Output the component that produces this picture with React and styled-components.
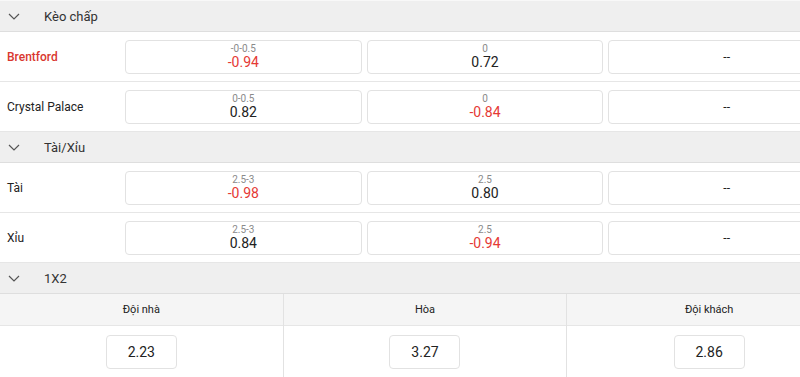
import React from 'react';
import styled, { createGlobalStyle } from 'styled-components';

const GlobalStyle = createGlobalStyle`
  html, body { margin: 0; padding: 0; background: #fff; overflow: hidden; }
  body { font-family: Roboto, "Noto Sans", Arial, sans-serif; color: #222; }
`;

const sections = [
  {
    title: 'Kèo chấp',
    rows: [
      { team: 'Brentford', highlight: true, cells: [{ line: '-0-0.5', odd: '-0.94' }, { line: '0', odd: '0.72' }, null] },
      { team: 'Crystal Palace', cells: [{ line: '0-0.5', odd: '0.82' }, { line: '0', odd: '-0.84' }, null] },
    ],
  },
  {
    title: 'Tài/Xỉu',
    rows: [
      { team: 'Tài', cells: [{ line: '2.5-3', odd: '-0.98' }, { line: '2.5', odd: '0.80' }, null] },
      { team: 'Xỉu', cells: [{ line: '2.5-3', odd: '0.84' }, { line: '2.5', odd: '-0.94' }, null] },
    ],
  },
];

const result = [
  { label: 'Đội nhà', odd: '2.23' },
  { label: 'Hòa', odd: '3.27' },
  { label: 'Đội khách', odd: '2.86' },
];

// the odds table is wider than the viewport and gets cut on the right
const Viewport = styled.div`
  width: 100vw;
  overflow: hidden;
`;

const Wrapper = styled.div`
  width: 851px;
  border-top: 1px solid #f8f8f8;
`;

const SectionHeader = styled.div`
  height: 30px;
  display: flex;
  align-items: center;
  background: #efefef;
  border-bottom: 1px solid #dedede;
  font-size: 13px;
  color: #333;
`;

const Chevron = styled.span`
  width: 44px;
  display: flex;
  padding-left: 8px;
  box-sizing: border-box;
  color: #555;
`;

const Row = styled.div`
  height: 49px;
  display: flex;
  align-items: center;
  padding: 0 6px 0 7px;
  border-bottom: 1px solid #e6e6e6;
  gap: 5px;
`;

const Team = styled.div`
  width: 113px;
  flex-shrink: 0;
  font-size: 12px;
  font-weight: ${p => (p.$highlight ? 500 : 400)};
  color: ${p => (p.$highlight ? '#d9372f' : '#222')};
`;

const OddBox = styled.div`
  flex: 1;
  height: 34px;
  box-sizing: border-box;
  border: 1px solid #e2e2e2;
  border-radius: 4px;
  display: flex;
  flex-direction: column;
  align-items: center;
  justify-content: center;
  padding-top: 1px;
`;

const Line = styled.div`
  font-size: 10px;
  line-height: 11px;
  color: #8a8a8a;
`;

const Odd = styled.div`
  font-size: 14px;
  line-height: 17px;
  color: ${p => (p.$neg ? '#e53935' : '#222')};
`;

const Empty = styled.div`
  font-size: 12px;
  color: #222;
`;

const Grid = styled.div`
  display: grid;
  grid-template-columns: repeat(3, 1fr);
`;

const Column = styled.div`
  display: flex;
  flex-direction: column;
  border-right: 1px solid #e2e2e2;
  &:last-child { border-right: none; }
`;

const ColHead = styled.div`
  height: 31px;
  display: flex;
  align-items: center;
  justify-content: center;
  background: #f5f5f5;
  border-bottom: 1px solid #e6e6e6;
  font-size: 11px;
  color: #222;
`;

const ColBody = styled.div`
  height: 51px;
  display: flex;
  justify-content: center;
  padding-top: 9px;
  box-sizing: border-box;
`;

const ResultBox = styled.div`
  width: 71px;
  height: 34px;
  box-sizing: border-box;
  border: 1px solid #e2e2e2;
  border-radius: 4px;
  display: flex;
  align-items: center;
  justify-content: center;
  font-size: 14px;
  color: #222;
`;

const Header = ({ title }) => (
  <SectionHeader>
    <Chevron>
      <svg width="12" height="7" viewBox="0 0 12 7" fill="none">
        <path d="M1 1l5 5 5-5" stroke="currentColor" strokeWidth="1.2" />
      </svg>
    </Chevron>
    {title}
  </SectionHeader>
);

export default function App() {
  return (
    <>
      <GlobalStyle />
      <Viewport>
        <Wrapper>
          {sections.map(section => (
            <div key={section.title}>
              <Header title={section.title} />
              {section.rows.map(row => (
                <Row key={row.team}>
                  <Team $highlight={row.highlight}>{row.team}</Team>
                  {row.cells.map((cell, i) => (
                    <OddBox key={i}>
                      {cell ? (
                        <>
                          <Line>{cell.line}</Line>
                          <Odd $neg={cell.odd.startsWith('-')}>{cell.odd}</Odd>
                        </>
                      ) : (
                        <Empty>--</Empty>
                      )}
                    </OddBox>
                  ))}
                </Row>
              ))}
            </div>
          ))}
          <Header title="1X2" />
          <Grid>
            {result.map(r => (
              <Column key={r.label}>
                <ColHead>{r.label}</ColHead>
                <ColBody>
                  <ResultBox>{r.odd}</ResultBox>
                </ColBody>
              </Column>
            ))}
          </Grid>
        </Wrapper>
      </Viewport>
    </>
  );
}
